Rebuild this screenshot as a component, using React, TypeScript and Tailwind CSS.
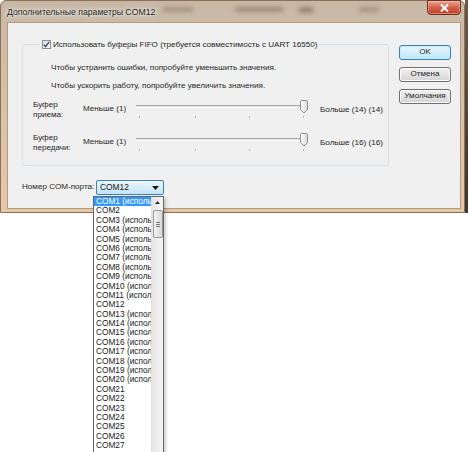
import React from 'react'

const ports = Array.from({ length: 30 }, (_, i) => {
  const n = i + 1
  const used = n <= 20 && n !== 2 && n !== 12
  return used ? `COM${n} (используется)` : `COM${n}`
})

const Slider = () => (
  <svg width="173" height="19" viewBox="0 0 173 19" className="block">
    <defs>
      <linearGradient id="thumb" x1="0" y1="0" x2="1" y2="0">
        <stop offset="0" stopColor="#ffffff" />
        <stop offset="1" stopColor="#d9d9d9" />
      </linearGradient>
    </defs>
    <rect x="0" y="5" width="168" height="1" fill="#a7a7a7" />
    <rect x="0" y="6" width="168" height="1" fill="#e3e3e3" />
    <rect x="0" y="7" width="168" height="1" fill="#ffffff" />
    {[3, 59, 113, 167].map((x) => (
      <rect key={x} x={x} y="16" width="1" height="2" fill="#b5b5b5" />
    ))}
    <path
      d="M164.5 1.5 Q164.5 0.5 165.5 0.5 H170.5 Q171.5 0.5 171.5 1.5 V9.5 L168 13 L164.5 9.5 Z"
      fill="url(#thumb)"
      stroke="#8e8e8e"
    />
  </svg>
)

const BufferRow = ({ top, bottom, max }: { top: string; bottom: string; max: string }) => (
  <div className="flex items-start h-[19px]">
    <div className="w-[50px] leading-[9.5px]">
      <div>{top}</div>
      <div>{bottom}</div>
    </div>
    <div className="w-[53px] mt-[3px] leading-[12px]">Меньше (1)</div>
    <Slider />
    <div className="ml-[11px] mt-[4px] leading-[12px] whitespace-nowrap">{max}</div>
  </div>
)

const Button = ({ label, primary }: { label: string; primary?: boolean }) => (
  <div
    className={
      'w-[52px] h-[15px] rounded-[3px] border flex items-center justify-center leading-none ' +
      (primary
        ? 'border-[#3c7fb1] bg-gradient-to-b from-[#eaf6fd] to-[#bee6fd] shadow-[inset_0_0_0_1px_#c7ecfd]'
        : 'border-[#707070] bg-gradient-to-b from-[#f2f2f2] to-[#d4d4d4] shadow-[inset_0_0_0_1px_#fbfbfb]')
    }
  >
    {label}
  </div>
)

export default function App() {
  return (
    <div className="relative w-[468px] h-[452px] overflow-hidden bg-white text-[8.1px] text-[#262626] font-['Liberation_Sans',Arial,sans-serif]">
      <div className="flex">
        <div className="w-[465px] h-[213px] flex flex-col rounded-t-[6px] border border-[#8d7055] bg-gradient-to-b from-[#c7b8a6] via-[#d6c2aa] to-[#e6c8a8] pl-[6px] pr-[3px] pb-[3px]">
          <div className="h-[21px] flex items-start">
            <div className="mt-[5px] leading-[12px] text-[8.7px] text-[#1d1d1d] [text-shadow:0_0_6px_#fff,0_0_3px_#fff] whitespace-nowrap">
              Дополнительные параметры COM12
            </div>
            <div className="flex-1 flex items-start pt-[6px]">
              <div className="ml-[8px] w-[30px] h-[5px] bg-[#a89580] blur-[2px]" />
              <div className="ml-[42px] w-[48px] h-[5px] bg-[#a38e78] blur-[2px]" />
              <div className="ml-[16px] w-[14px] h-[6px] bg-[#9c8670] blur-[2px]" />
              <div className="ml-[46px] w-[20px] h-[5px] bg-[#aa9680] blur-[2px]" />
            </div>
            <div className="w-[34px] h-[15px] -mt-[1px] rounded-b-[4px] border border-[#6b2e22] bg-gradient-to-b from-[#e9a896] via-[#d0604a] to-[#c23e24] flex items-center justify-center shadow-[inset_0_0_0_1px_rgba(255,200,180,0.5)]">
              <svg width="9" height="8" viewBox="0 0 9 8">
                <path d="M1 0.5 L8 7.5 M8 0.5 L1 7.5" stroke="#ffffff" strokeWidth="2" />
              </svg>
            </div>
          </div>
          <div className="flex-1 bg-[#f0f0f0] border border-[#b79a7c] flex flex-col">
            <div className="flex pl-[14px] pt-[21px]">
              <div className="relative w-[367px] h-[122px] border border-[#d5dfe5] rounded-[3px] pl-[10px] pt-[17px]">
                <div className="absolute -top-[6px] left-[17px] px-[2px] bg-[#f0f0f0] flex items-center gap-[2px] leading-[11px]">
                  <div className="w-[9px] h-[9px] border border-[#8f8f8f] bg-gradient-to-br from-[#dedede] to-[#fafafa] flex items-center justify-center">
                    <svg width="7" height="7" viewBox="0 0 7 7">
                      <path d="M0.8 3.6 L2.6 5.6 L6.2 0.8" fill="none" stroke="#2a4a7a" strokeWidth="1.4" />
                    </svg>
                  </div>
                  <span className="whitespace-nowrap">
                    Использовать буферы FIFO (требуется совместимость с UART 16550)
                  </span>
                </div>
                <div className="pl-[18px] leading-[12px]">Чтобы устранить ошибки, попробуйте уменьшить значения.</div>
                <div className="pl-[18px] leading-[12px] mt-[6px]">Чтобы ускорить работу, попробуйте увеличить значения.</div>
                <div className="mt-[8px]">
                  <BufferRow top="Буфер" bottom="приема:" max="Больше (14) (14)" />
                </div>
                <div className="mt-[14px]">
                  <BufferRow top="Буфер" bottom="передачи:" max="Больше (16) (16)" />
                </div>
              </div>
              <div className="ml-[10px] mt-[1px] flex flex-col gap-[7px]">
                <Button label="OK" primary />
                <Button label="Отмена" />
                <Button label="Умолчания" />
              </div>
            </div>
            <div className="flex items-center pl-[14px] mt-[14px]">
              <div className="w-[74px] whitespace-nowrap">Номер COM-порта:</div>
              <div className="w-[68px] h-[15px] rounded-[2px] border border-[#3c7fb1] bg-gradient-to-b from-[#edf7fd] to-[#c2e4f7] flex items-center pl-[3px] pr-[4px]">
                <span className="flex-1 text-[8.4px] text-[#1a1a1a]">COM12</span>
                <svg width="7" height="4" viewBox="0 0 7 4">
                  <path d="M0 0 H7 L3.5 4 Z" fill="#1a1a1a" />
                </svg>
              </div>
            </div>
          </div>
        </div>
        <div className="w-[3px] h-[213px] bg-gradient-to-b from-[#6a5a4a] to-[#3c3530]" />
      </div>

      <div className="absolute left-[93px] top-[196px] w-[71px] h-[270px] bg-white border border-[#646464] flex shadow-[2px_2px_3px_rgba(0,0,0,0.2)]">
        <div className="flex-1 overflow-hidden">
          {ports.map((p, i) => (
            <div
              key={p}
              className={
                'h-[9.4px] leading-[9.4px] pl-[2px] whitespace-nowrap text-[8.3px] ' +
                (i === 0 ? 'bg-[#3399ff] text-white' : 'text-[#1a1a1a]')
              }
            >
              {p}
            </div>
          ))}
        </div>
        <div className="w-[12px] bg-gradient-to-r from-[#e6e6e6] to-[#f5f5f5] border-l border-[#e0e0e0] flex flex-col items-center">
          <div className="h-[11px] w-full flex items-center justify-center">
            <svg width="5" height="3" viewBox="0 0 5 3">
              <path d="M0 3 L2.5 0 L5 3 Z" fill="#2a2a2a" />
            </svg>
          </div>
          <div className="mt-[2px] w-[10px] h-[28px] rounded-[2px] border border-[#979797] bg-gradient-to-r from-[#f4f4f4] to-[#d8d8d8] flex flex-col items-center justify-center gap-[1px]">
            <div className="w-[4px] h-[1px] bg-[#7a7a7a]" />
            <div className="w-[4px] h-[1px] bg-[#7a7a7a]" />
            <div className="w-[4px] h-[1px] bg-[#7a7a7a]" />
          </div>
        </div>
      </div>
    </div>
  )
}
